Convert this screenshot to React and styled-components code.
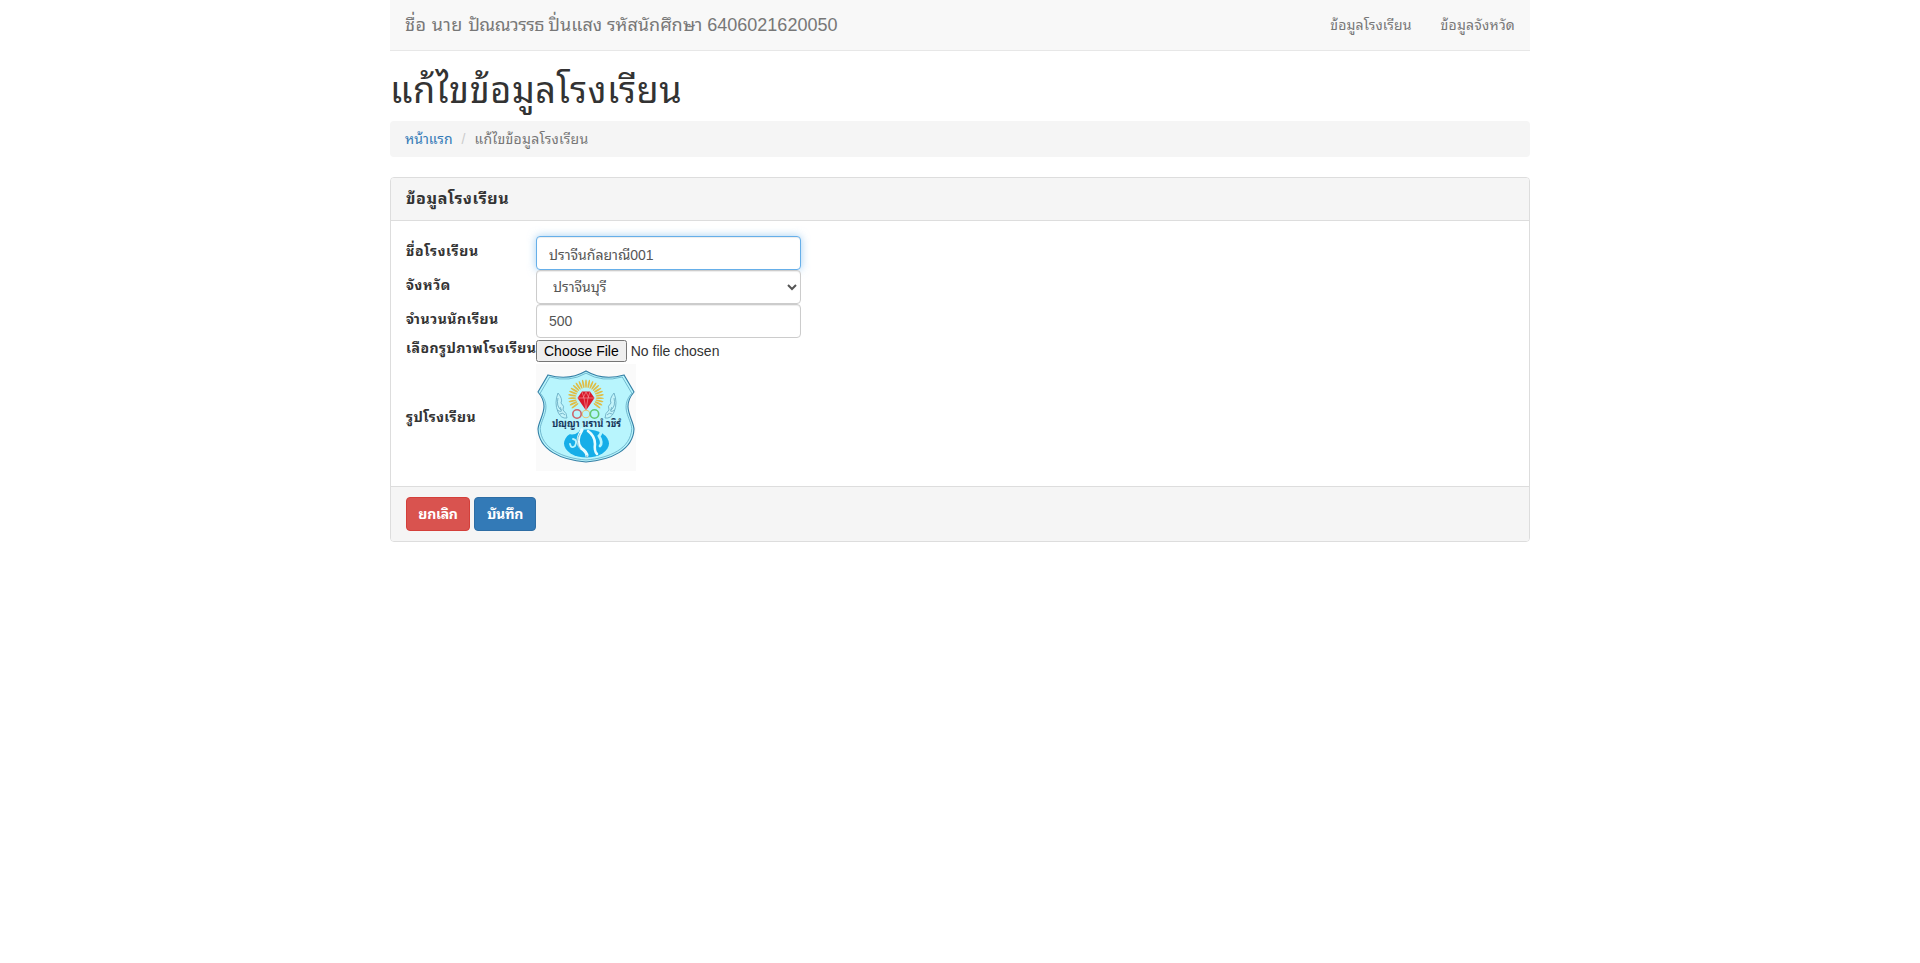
import React from 'react';
import styled, { createGlobalStyle } from 'styled-components';

const Global = createGlobalStyle`
  *, *::before, *::after { box-sizing: border-box; }
  body {
    margin: 0;
    background: #fff;
    color: #333;
    font: 14px/20px "Liberation Sans", "Noto Looped Thai", "Noto Sans Thai Looped", Loma, "Noto Sans Thai", "Noto Sans", sans-serif;
  }
  input, select, button { font-family: inherit; }
`;

const Container = styled.div`
  width: 1140px;
  margin: 0 auto;
`;

const Navbar = styled.nav`
  display: flex;
  justify-content: space-between;
  height: 51px;
  padding: 15px;
  background: #f8f8f8;
  border-bottom: 1px solid #e7e7e7;
  color: #777;
`;

const Brand = styled.span`
  font-size: 18px;
  white-space: pre;
`;

const NavLinks = styled.div`
  display: flex;
  gap: 29px;
  white-space: nowrap;
`;

const Text = styled.span`
  font-size: ${(p) => (p.$size ? `${p.$size}px` : 'inherit')};
  letter-spacing: ${(p) => p.$track || 0}px;
`;

const Title = styled.h1`
  margin: 20px 0 10px;
  font-size: 36px;
  font-weight: 400;
  line-height: 40px;
  letter-spacing: 0.6px;
  white-space: nowrap;
`;

const Breadcrumb = styled.div`
  display: flex;
  height: 36px;
  padding: 8px 15px;
  margin-bottom: 20px;
  border-radius: 4px;
  background: #f5f5f5;
  color: #777;
`;

const Crumb = styled.a`
  color: #337ab7;
`;

const Slash = styled.span`
  padding: 0 9px 0 9px;
  color: #ccc;
`;

const Panel = styled.section`
  height: 365px;
  border: 1px solid #ddd;
  border-radius: 4px;
  overflow: hidden;
  display: flex;
  flex-direction: column;
`;

const PanelHeading = styled.header`
  height: 43px;
  padding: 11px 15px;
  background: #f5f5f5;
  border-bottom: 1px solid #ddd;
  font-weight: 700;
`;

const PanelBody = styled.div`
  flex: 1;
  padding: 15px;
`;

const Row = styled.div`
  display: flex;
  height: ${(p) => p.$h}px;
`;

const Label = styled.label`
  width: 130px;
  padding-top: ${(p) => p.$top}px;
  font-weight: 700;
  letter-spacing: ${(p) => p.$track}px;
  white-space: nowrap;
`;

const Field = styled.input`
  width: 265px;
  height: 34px;
  padding: 6px 12px;
  border: 1px solid ${(p) => (p.$active ? '#66afe9' : '#ccc')};
  border-radius: 4px;
  outline: 0;
  background: #fff;
  color: #555;
  font-size: 14px;
  box-shadow: inset 0 1px 1px rgba(0, 0, 0, 0.075)
    ${(p) => (p.$active ? ', 0 0 8px rgba(102, 175, 233, 0.6)' : '')};
`;

const FilePicker = styled.input`
  width: 265px;
  height: 22px;
  margin-top: 2px;
  font-size: 14px;
  color: #333;
`;

const PanelFooter = styled.footer`
  display: flex;
  gap: 4px;
  height: 56px;
  padding: 10px 15px;
  background: #f5f5f5;
  border-top: 1px solid #ddd;
`;

const Button = styled.button`
  width: ${(p) => p.$w}px;
  height: 34px;
  padding: 0 0 3px;
  border: 1px solid ${(p) => p.$edge};
  border-radius: 4px;
  background: ${(p) => p.$bg};
  color: #fff;
  font-size: 14px;
  font-weight: 700;
  letter-spacing: -0.3px;
`;

const rays = Array.from({ length: 23 }, (_, i) => 143 + (i * 254) / 22);
const shield =
  'M12 11 Q33 17 50 7 Q67 17 88 11 L98 28 C85 43 97 54 98 65 C97 86 75 96 50 98 C25 96 3 86 2 65 C3 54 15 43 2 28 Z';

const Wing = ({ flip }) => (
  <g
    transform={flip ? 'translate(100 0) scale(-1 1)' : undefined}
    fill="#c3f4fa"
    stroke="#6bafc5"
    strokeWidth="0.9"
  >
    <path d="M22 29 Q18 39 22 48 Q25 55 31 54 Q31 49 27 46 Q29 42 25 39 Q27 35 22 29Z" />
    <path d="M22 34 Q20 42 25 46 M24 43 Q28 50 21 46 M24 50 Q27 48 29 51" fill="none" />
  </g>
);

const Crest = () => (
  <svg width="100" height="107" viewBox="0 0 100 107" role="img">
    <rect width="100" height="107" fill="#fafafa" />
    <path d={shield} fill="#b8f5fd" stroke="#347fa5" strokeWidth="1.1" />
    <path
      d={shield}
      fill="none"
      stroke="#4b9ab8"
      strokeWidth="0.7"
      transform="translate(2.3 2.5) scale(0.954)"
    />
    {rays.map((a) => (
      <ellipse
        key={a}
        cx="13.8"
        cy="0"
        rx="4.2"
        ry="0.9"
        fill="#dfbd45"
        transform={`translate(50 33.5) rotate(${a})`}
      />
    ))}
    <Wing />
    <Wing flip />
    <path d="M46 27.5 H54 L58.5 34 L50 46.5 L41.5 34Z" fill="#d9192b" />
    <path
      d="M42 34 H58 M46 28 L48 34 L50 46 L52 34 L54 28 M50 28 L47 34 M50 28 L53 34"
      fill="none"
      stroke="#f5a0a5"
      strokeWidth="0.6"
    />
    <g fill="none" strokeWidth="1.6">
      <circle cx="50" cy="50" r="3.8" stroke="#dfc678" strokeWidth="1.1" />
      <circle cx="41" cy="50" r="4.2" stroke="#cd6469" />
      <circle cx="58.5" cy="50" r="4.2" stroke="#62c873" />
    </g>
    <ellipse cx="50.5" cy="79.5" rx="22.5" ry="14" fill="#16aee8" />
    <g fill="none" stroke="#b8f5fd" strokeLinecap="round">
      <path d="M31 66 Q36 70 41 66" strokeWidth="5" />
      <path d="M37 75 Q42 76 39 82 Q35 85 34 80" strokeWidth="1.8" />
      <path d="M63 65 Q67 68 63 72 Q67 79 64 82" strokeWidth="2.8" />
      <path d="M46 66 Q39 77 45 84 Q51 88 51 92" strokeWidth="3.2" stroke="#e6fdff" />
      <path d="M52 67 Q59 72 59 80 Q58 87 61 90" strokeWidth="2.6" stroke="#e6fdff" />
    </g>
    <path d="M44 69 Q39 78 44 85 M53 92 Q49 95 51 91" fill="none" stroke="#2487ad" strokeWidth="0.5" />
    <text
      x="16"
      y="62.5"
      textLength="69"
      lengthAdjust="spacingAndGlyphs"
      fontSize="11"
      fontWeight="700"
      fill="#17375b"
    >
      ปญฺญา นรานํ วชิรํ
    </text>
  </svg>
);

export default function App() {
  return (
    <Container>
      <Global />
      <Navbar>
        <Brand>
          <Text $track={0.4}>{'ชื่อ นาย '}</Text>
          <Text $track={-0.5}>{'ปัณณวรรธ '}</Text>
          <Text>{'ปิ่นแสง '}</Text>
          <Text>{'รหัสนักศึกษา '}</Text>
          6406021620050
        </Brand>
        <NavLinks>
          <Text $track={0.1}>ข้อมูลโรงเรียน</Text>
          <Text $track={0.2}>ข้อมูลจังหวัด</Text>
        </NavLinks>
      </Navbar>
      <Title>แก้ไขข้อมูลโรงเรียน</Title>
      <Breadcrumb>
        <Crumb>หน้าแรก</Crumb>
        <Slash>/</Slash>
        <Text $track={0.25}>แก้ไขข้อมูลโรงเรียน</Text>
      </Breadcrumb>
      <Panel>
        <PanelHeading>
          <Text $size={16} $track={0.6}>ข้อมูลโรงเรียน</Text>
        </PanelHeading>
        <PanelBody>
          <Row $h={34}>
            <Label $top={5} $track={0.65}>ชื่อโรงเรียน</Label>
            <Field $active defaultValue="ปราจีนกัลยาณี001" />
          </Row>
          <Row $h={34}>
            <Label $top={5} $track={0.6}>จังหวัด</Label>
            <Field as="select" defaultValue="1">
              <option value="1">ปราจีนบุรี</option>
            </Field>
          </Row>
          <Row $h={34}>
            <Label $top={5} $track={0.5}>จำนวนนักเรียน</Label>
            <Field defaultValue="500" />
          </Row>
          <Row $h={26}>
            <Label $top={0} $track={0.45}>เลือกรูปภาพโรงเรียน</Label>
            <FilePicker type="file" />
          </Row>
          <Row $h={107}>
            <Label $top={43} $track={0.4}>รูปโรงเรียน</Label>
            <Crest />
          </Row>
        </PanelBody>
        <PanelFooter>
          <Button $w={64} $bg="#d9534f" $edge="#d43f3a">ยกเลิก</Button>
          <Button $w={62} $bg="#337ab7" $edge="#2e6da4">บันทึก</Button>
        </PanelFooter>
      </Panel>
    </Container>
  );
}
